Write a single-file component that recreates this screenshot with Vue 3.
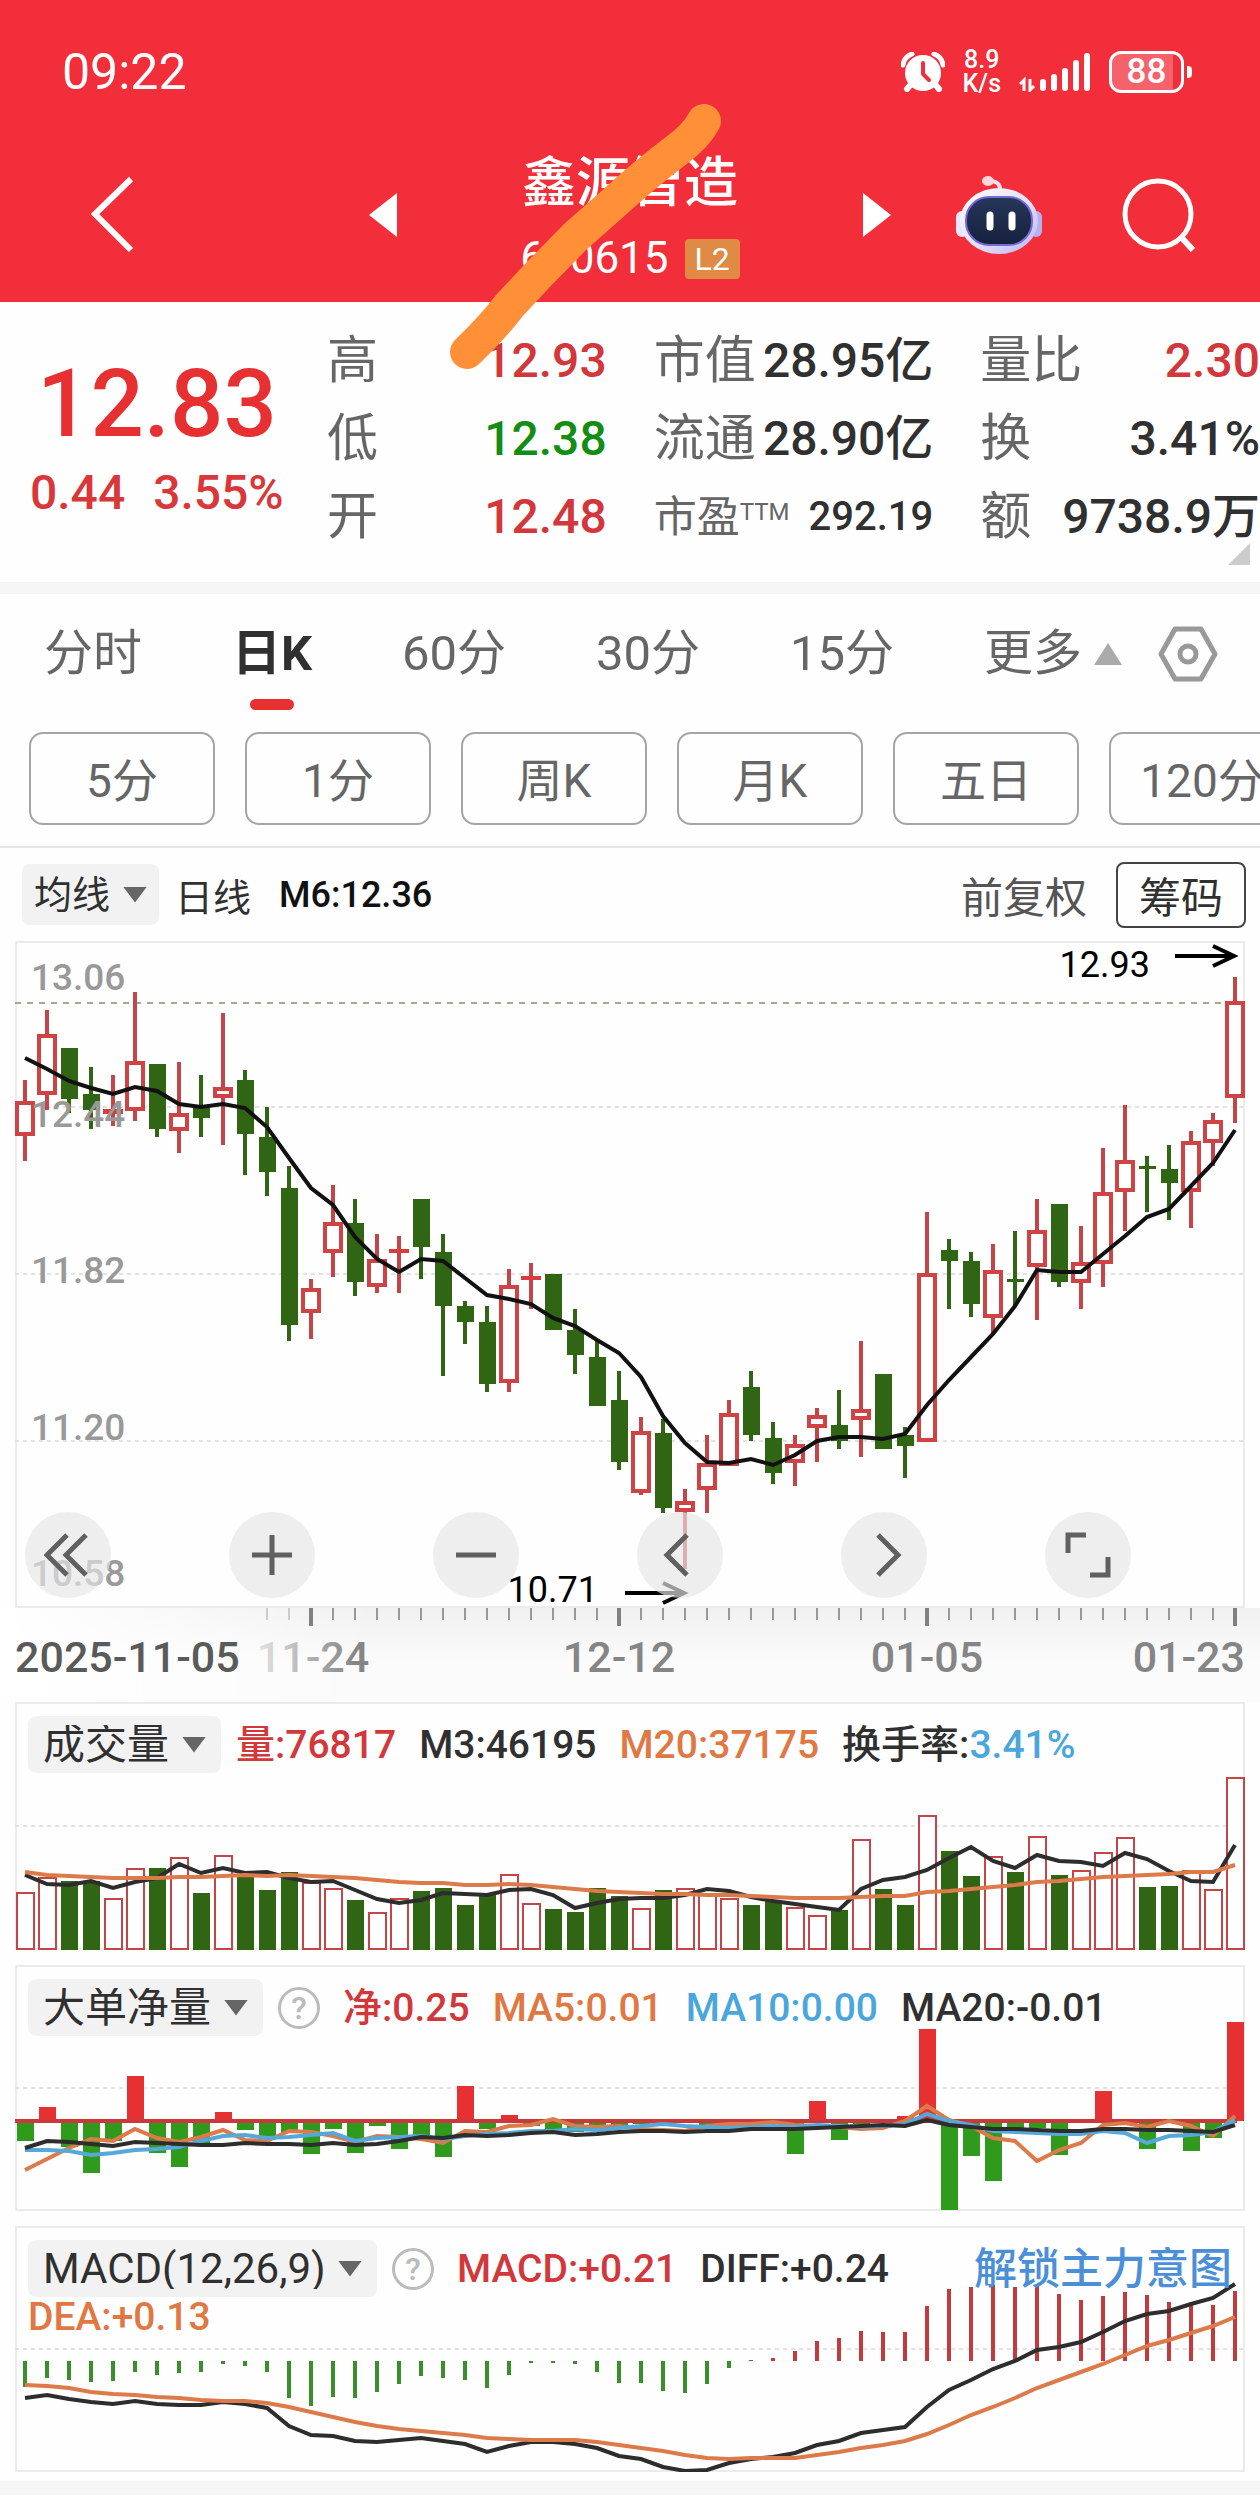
<template>
  <div class="page">
    <header class="header">
      <div class="status">
        <span class="clock">09:22</span>
        <div class="status-icons">
          <svg class="alarm" viewBox="0 0 44 40" width="44" height="40">
            <path d="M2 13 Q3 5 11 2 M42 13 Q41 5 33 2" fill="none" stroke="#fff" stroke-width="5" stroke-linecap="round" />
            <path d="M11 31 L6 37 M33 31 L38 37" stroke="#fff" stroke-width="6" stroke-linecap="round" />
            <circle cx="22" cy="21" r="18" fill="#fff" />
            <path d="M22 11 V22 L28 28" fill="none" stroke="#f22e3a" stroke-width="4" stroke-linecap="round" stroke-linejoin="round" />
          </svg>
          <span class="speed"><span>8.9</span><span>K/s</span></span>
          <svg class="signal" viewBox="0 0 72 40" width="72" height="40">
            <path d="M5 39 V28 L1 32 M11 27 V38 L15 34" fill="none" stroke="#fff" stroke-width="3" />
            <path d="M24 36 V30 M35 36 V25 M46 36 V19 M57 36 V11 M68 36 V4" stroke="#fff" stroke-width="6" stroke-linecap="round" />
          </svg>
          <span class="battery">88</span>
        </div>
      </div>

      <nav class="nav">
        <button class="icon-btn back" aria-label="返回">
          <svg viewBox="0 0 44 78" width="44" height="78">
            <path d="M40 3 L4 38 L40 74" fill="none" stroke="#fff" stroke-width="6" />
          </svg>
        </button>
        <div class="switcher">
          <button class="icon-btn" aria-label="上一只">
            <svg viewBox="0 0 28 44" width="28" height="44"><path d="M28 0 V44 L0 22 Z" fill="#fff" /></svg>
          </button>
          <div class="stock">
            <h1>鑫源智造</h1>
            <p>600615 <span class="level">L2</span></p>
          </div>
          <button class="icon-btn" aria-label="下一只">
            <svg viewBox="0 0 28 44" width="28" height="44"><path d="M0 0 V44 L28 22 Z" fill="#fff" /></svg>
          </button>
        </div>
        <div class="actions">
          <button class="icon-btn" aria-label="助手">
            <svg viewBox="0 0 86 80" width="86" height="80">
              <defs>
                <linearGradient id="shell" x1="0" y1="0" x2="1" y2="1">
                  <stop offset="0" stop-color="#ffffff" />
                  <stop offset="0.55" stop-color="#e3e0fb" />
                  <stop offset="1" stop-color="#b9b2f2" />
                </linearGradient>
                <linearGradient id="visor" x1="0" y1="0" x2="0" y2="1">
                  <stop offset="0" stop-color="#27375a" />
                  <stop offset="1" stop-color="#15203c" />
                </linearGradient>
              </defs>
              <path d="M44 16 Q45 6 33 6" fill="none" stroke="#f3dfee" stroke-width="4" />
              <ellipse cx="32" cy="6" rx="6" ry="5" fill="#ffd5dc" />
              <rect x="0" y="36" width="12" height="26" rx="6" fill="#e9e6fb" />
              <rect x="74" y="36" width="12" height="26" rx="6" fill="#b7b0f0" />
              <ellipse cx="43" cy="46" rx="39" ry="33" fill="url(#shell)" />
              <rect x="10" y="22" width="66" height="48" rx="23" fill="url(#visor)" stroke="#7669d8" stroke-width="2" />
              <path d="M34 40 V52 M56 40 V52" stroke="#fff" stroke-width="7" stroke-linecap="round" />
            </svg>
          </button>
          <button class="icon-btn" aria-label="搜索">
            <svg viewBox="0 0 74 74" width="74" height="74">
              <circle cx="36" cy="36" r="33" fill="none" stroke="#fff" stroke-width="5" />
              <path d="M59 59 L71 72" stroke="#fff" stroke-width="6" />
            </svg>
          </button>
        </div>
      </nav>

      <svg class="marker" viewBox="0 0 300 300" width="300" height="300" aria-hidden="true">
        <path d="M264 37 Q256 52 237 66 Q205 90 169 123 L135 153 L96 193 L69 222 Q54 242 27 268" fill="none" stroke="#ff9038" stroke-width="34" stroke-linecap="round" stroke-linejoin="round" />
      </svg>
    </header>

    <section class="quote">
      <div class="price">
        <strong>12.83</strong>
        <p><span>0.44</span><span>3.55%</span></p>
      </div>
      <dl v-for="(group, g) in quotes" :key="g">
        <div v-for="row in group" :key="row.label" :class="{ small: row.sup }">
          <dt>{{ row.label }}<sup v-if="row.sup">{{ row.sup }}</sup></dt>
          <dd :class="row.tone">{{ row.value }}</dd>
        </div>
      </dl>
      <i class="fold"></i>
    </section>

    <div class="tabs">
      <button v-for="tab in tabs" :key="tab" :class="{ active: tab === activeTab }" @click="activeTab = tab">{{ tab }}</button>
      <button class="more">更多<i class="tri up"></i></button>
      <button class="icon-btn" aria-label="设置">
        <svg viewBox="0 0 60 56" width="60" height="56">
          <path d="M17 3 H43 L57 28 L43 53 H17 L3 28 Z" fill="none" stroke="#999" stroke-width="5" stroke-linejoin="round" />
          <circle cx="30" cy="28" r="8" fill="none" stroke="#999" stroke-width="5" />
        </svg>
      </button>
    </div>

    <div class="chips">
      <button v-for="chip in chips" :key="chip">{{ chip }}</button>
    </div>

    <div class="toolbar">
      <label class="picker">
        <select aria-label="主图指标"><option>均线</option></select>
        <i class="tri"></i>
      </label>
      <span>日线</span>
      <span class="ma">M6:12.36</span>
      <button class="adjust">前复权</button>
      <button class="cost">筹码</button>
    </div>

    <section class="panel kline">
      <svg viewBox="0 0 1230 667">
        <g class="grid">
          <path v-for="y in [166, 333, 500]" :key="y" :d="`M0 ${y} H1230`" />
        </g>
        <path d="M0 62 H1210" class="last-price" />
        <g v-for="(c, i) in candles" :key="i" :class="c[0] === 'r' ? 'rise' : 'fall'">
          <path :d="`M${cx(i)} ${c[1]} V${c[2]} M${cx(i)} ${c[3]} V${c[4]}`" class="wick" />
          <rect v-if="c[0] === 'g'" :x="cx(i) - 8" :y="c[2]" width="17" :height="c[3] - c[2]" class="solid" />
          <rect v-else-if="c[3] - c[2] < 7" :x="cx(i) - 10" :y="c[2]" width="20" :height="c[3] - c[2]" class="solid" />
          <rect v-else :x="cx(i) - 8" :y="c[2] + 2" width="16" :height="c[3] - c[2] - 4" class="hollow" />
        </g>
        <g class="scale">
          <text x="16" y="49">13.06</text>
          <text x="16" y="186">12.44</text>
          <text x="16" y="342">11.82</text>
          <text x="16" y="499">11.20</text>
          <text x="16" y="645">10.58</text>
        </g>
        <polyline :points="line(ma6)" class="ln black" />
        <g class="mark">
          <text x="1135" y="36" text-anchor="end">12.93</text>
          <path d="M1160 15 H1219 M1198 5 L1219 15 L1198 25" />
          <text x="583" y="661" text-anchor="end">10.71</text>
          <path d="M610 652 H669 M648 642 L669 652 L648 662" />
        </g>
      </svg>
      <div class="controls">
        <button v-for="c in controls" :key="c.name" :aria-label="c.name">
          <svg viewBox="0 0 48 48" width="48" height="48"><path :d="c.d" fill="none" stroke="#606060" stroke-width="5" /></svg>
        </button>
      </div>
    </section>

    <div class="axis">
      <svg viewBox="0 0 1230 94">
        <defs>
          <linearGradient id="fade" gradientUnits="userSpaceOnUse" x1="240" y1="0" x2="340" y2="0">
            <stop offset="0" stop-color="#e6e6e6" />
            <stop offset="1" stop-color="#858585" />
          </linearGradient>
        </defs>
        <template v-for="i in 45" :key="i">
          <path :d="`M${cx(i + 10)} 0 V${isMajor(i + 10) ? 18 : 12}`" :class="['tick', { major: isMajor(i + 10), pale: i < 3 }]" />
        </template>
        <text x="0" y="64" class="first">2025-11-05</text>
        <text x="298" y="64" text-anchor="middle" class="faded">11-24</text>
        <text x="604" y="64" text-anchor="middle">12-12</text>
        <text x="912" y="64" text-anchor="middle">01-05</text>
        <text x="1230" y="64" text-anchor="end">01-23</text>
      </svg>
    </div>

    <section class="panel">
      <svg viewBox="0 0 1230 248">
        <path d="M0 124 H1230" class="dots" />
        <template v-for="(h, i) in volumes" :key="i">
          <rect v-if="candles[i][0] === 'g'" :x="cx(i) - 8" :y="248 - h" width="17" :height="h" fill="#306514" />
          <rect v-else :x="cx(i) - 8" :y="249 - h" width="17" :height="h - 2" class="vol" />
        </template>
        <polyline :points="line(vol3, 248)" class="ln dark" />
        <polyline :points="line(vol20, 248)" class="ln orange" />
      </svg>
      <div class="head">
        <label class="picker">
          <select aria-label="副图一"><option>成交量</option></select>
          <i class="tri"></i>
        </label>
        <span class="red">量:76817</span>
        <span>M3:46195</span>
        <span class="orange">M20:37175</span>
        <span>换手率:<em class="blue">3.41%</em></span>
      </div>
    </section>

    <section class="panel">
      <svg viewBox="0 0 1230 246">
        <path d="M0 123 H1230" class="dots" />
        <rect v-for="(v, i) in net" :key="i" :x="cx(i) - 8" :y="v > 0 ? 156 - v : 156" width="17" :height="Math.abs(v)" :fill="v > 0 ? '#e63031' : '#2f9a1b'" />
        <path d="M0 156 H1222" stroke="#c9393b" stroke-width="4" />
        <polyline :points="line(net5)" class="ln orange" />
        <polyline :points="line(net10)" class="ln blue" />
        <polyline :points="line(net20)" class="ln dark" />
      </svg>
      <div class="head">
        <label class="picker">
          <select aria-label="副图二"><option>大单净量</option></select>
          <i class="tri"></i>
        </label>
        <button class="help" aria-label="说明">?</button>
        <span class="red">净:0.25</span>
        <span class="orange">MA5:0.01</span>
        <span class="blue">MA10:0.00</span>
        <span>MA20:-0.01</span>
      </div>
    </section>

    <section class="panel">
      <svg viewBox="0 0 1230 246">
        <path d="M0 123 H1230" class="dots" />
        <path v-for="(v, i) in macd" :key="i" :d="`M${cx(i)} 135 V${135 - v}`" :stroke="v > 0 ? '#c23a3c' : '#3a8f2c'" stroke-width="4" />
        <polyline :points="line(diff)" class="ln dark" />
        <polyline :points="line(dea)" class="ln orange" />
      </svg>
      <div class="head">
        <label class="picker">
          <select aria-label="副图三"><option>MACD(12,26,9)</option></select>
          <i class="tri"></i>
        </label>
        <button class="help" aria-label="说明">?</button>
        <span class="red">MACD:+0.21</span>
        <span>DIFF:+0.24</span>
        <a href="#" class="unlock">解锁主力意图</a>
        <span class="orange second">DEA:+0.13</span>
      </div>
    </section>
    <div class="band"></div>
  </div>
</template>

<script setup>
import { ref } from 'vue'

const tabs = ['分时', '日K', '60分', '30分', '15分']
const activeTab = ref('日K')
const chips = ['5分', '1分', '周K', '月K', '五日', '120分']

const quotes = [
  [
    { label: '高', value: '12.93', tone: 'red' },
    { label: '低', value: '12.38', tone: 'green' },
    { label: '开', value: '12.48', tone: 'red' }
  ],
  [
    { label: '市值', value: '28.95亿' },
    { label: '流通', value: '28.90亿' },
    { label: '市盈', sup: 'TTM', value: '292.19' }
  ],
  [
    { label: '量比', value: '2.30', tone: 'red' },
    { label: '换', value: '3.41%' },
    { label: '额', value: '9738.9万' }
  ]
]

const controls = [
  { name: '最早', d: 'M23 4 L3 24 L23 44 M42 4 L22 24 L42 44' },
  { name: '放大', d: 'M4 24 H44 M24 4 V44' },
  { name: '缩小', d: 'M4 24 H44' },
  { name: '左移', d: 'M31 4 L11 24 L31 44' },
  { name: '右移', d: 'M18 4 L38 24 L18 44' },
  { name: '全屏', d: 'M4 22 V4 H22 M26 44 H44 V26' }
]

// colour, high, body top, body bottom, low
const candles = [
  ['r', 139, 160, 195, 220], ['r', 69, 93, 154, 169], ['g', 107, 107, 158, 172], ['g', 126, 153, 169, 188],
  ['r', 134, 168, 173, 185], ['r', 51, 120, 170, 180], ['g', 123, 123, 188, 196], ['r', 121, 172, 190, 212],
  ['g', 134, 166, 177, 196], ['r', 72, 146, 157, 204], ['g', 129, 139, 193, 234], ['g', 166, 196, 231, 255],
  ['g', 225, 247, 384, 400], ['r', 338, 347, 372, 398], ['r', 244, 281, 312, 336], ['g', 258, 282, 341, 355],
  ['r', 293, 318, 346, 352], ['r', 295, 308, 312, 352], ['g', 258, 258, 306, 338], ['g', 293, 311, 365, 435],
  ['g', 360, 365, 381, 403], ['g', 365, 381, 443, 451], ['r', 328, 344, 442, 451], ['r', 322, 335, 339, 368],
  ['g', 333, 333, 389, 389], ['g', 368, 389, 414, 433], ['g', 400, 416, 465, 465], ['g', 430, 459, 521, 529],
  ['r', 476, 490, 552, 554], ['g', 478, 492, 567, 572], ['r', 548, 560, 571, 628], ['r', 494, 522, 549, 572],
  ['r', 459, 472, 525, 525], ['g', 430, 446, 494, 500], ['g', 481, 497, 532, 543], ['r', 494, 503, 522, 545],
  ['r', 467, 474, 487, 521], ['g', 449, 484, 500, 508], ['r', 400, 468, 479, 516], ['g', 433, 433, 508, 508],
  ['g', 486, 494, 505, 537], ['r', 271, 332, 501, 501], ['g', 298, 309, 320, 368], ['g', 311, 320, 363, 376],
  ['r', 303, 329, 377, 392], ['g', 290, 338, 341, 365], ['r', 258, 289, 326, 379], ['g', 263, 263, 341, 346],
  ['r', 285, 321, 342, 368], ['r', 207, 251, 323, 346], ['r', 164, 219, 251, 290], ['g', 215, 225, 228, 271],
  ['g', 204, 228, 242, 279], ['r', 190, 200, 251, 287], ['r', 172, 179, 202, 225], ['r', 36, 60, 157, 182]
]
const ma6 = [117, 128, 140, 147, 153, 146, 150, 163, 166, 163, 167, 186, 217, 247, 264, 296, 318, 331, 318, 320, 337, 354, 358, 363, 377, 385, 399, 412, 436, 475, 502, 521, 522, 518, 524, 514, 500, 496, 496, 498, 493, 464, 439, 416, 393, 365, 329, 331, 331, 313, 295, 276, 268, 245, 222, 189]

const volumes = [58, 73, 69, 69, 52, 82, 82, 93, 57, 95, 76, 60, 78, 68, 62, 50, 38, 52, 59, 62, 45, 57, 76, 47, 41, 38, 62, 54, 42, 60, 62, 57, 52, 45, 49, 43, 35, 40, 111, 61, 45, 135, 99, 74, 94, 78, 114, 75, 80, 98, 113, 63, 64, 80, 61, 173]
const vol3 = [75, 66, 65, 69, 62, 68, 72, 86, 77, 82, 77, 78, 72, 68, 69, 60, 51, 47, 50, 57, 56, 55, 60, 61, 55, 42, 47, 51, 52, 52, 55, 61, 59, 53, 49, 46, 43, 40, 61, 70, 73, 80, 92, 103, 89, 82, 95, 89, 88, 84, 97, 91, 79, 69, 68, 105]
const vol20 = [78, 75, 74, 73, 72, 72, 72, 73, 73, 74, 75, 74, 75, 74, 73, 72, 70, 68, 67, 67, 65, 65, 66, 65, 63, 61, 59, 58, 57, 56, 56, 55, 55, 54, 53, 52, 52, 52, 53, 54, 54, 58, 59, 61, 63, 65, 68, 69, 71, 73, 74, 75, 76, 78, 78, 85]

const net = [-20, 14, -26, -52, -20, 45, -32, -46, -24, 9, -9, -18, -12, -33, -8, -32, -5, -28, -14, -36, 35, -8, 6, -5, -8, -11, -4, -5, -3, -3, -2, -4, 0, 0, 0, -33, 20, -19, -3, 0, 5, 92, -89, -35, -60, -8, -7, -34, 0, 30, 0, -28, 0, -30, -17, 99]
const net5 = [205, 194, 183, 174, 176, 164, 173, 177, 172, 165, 175, 176, 166, 167, 171, 177, 171, 172, 174, 178, 166, 167, 161, 160, 154, 161, 162, 161, 164, 165, 166, 161, 159, 159, 157, 160, 161, 162, 164, 163, 156, 141, 155, 161, 173, 176, 196, 185, 178, 160, 158, 162, 156, 161, 171, 151]
const net10 = [185, 185, 186, 190, 188, 185, 184, 182, 176, 171, 170, 173, 172, 170, 168, 176, 173, 172, 171, 174, 171, 169, 168, 166, 166, 164, 165, 163, 161, 159, 161, 162, 163, 162, 161, 162, 160, 161, 162, 161, 159, 149, 156, 160, 166, 167, 168, 169, 169, 166, 168, 178, 171, 170, 167, 155]
const net20 = [183, 176, 177, 179, 181, 177, 178, 179, 180, 180, 178, 179, 179, 180, 178, 180, 179, 176, 172, 173, 170, 171, 170, 168, 167, 170, 169, 167, 166, 166, 167, 166, 166, 164, 164, 164, 163, 162, 161, 160, 161, 155, 160, 162, 164, 164, 165, 166, 166, 164, 164, 165, 165, 166, 167, 160]

const macd = [-26, -17, -19, -21, -20, -11, -14, -12, -11, -3, -5, -11, -37, -45, -36, -37, -31, -23, -15, -17, -19, -27, -14, -2, -2, -3, -11, -22, -22, -30, -32, -23, -7, 1, 3, 10, 20, 23, 30, 29, 29, 55, 72, 74, 76, 74, 75, 67, 61, 65, 69, 66, 59, 57, 56, 70]
const diff = [172, 169, 173, 176, 178, 175, 178, 179, 179, 176, 178, 182, 200, 209, 210, 215, 216, 214, 212, 215, 218, 226, 220, 216, 216, 218, 222, 230, 233, 241, 245, 244, 237, 233, 231, 227, 219, 215, 207, 204, 201, 181, 164, 154, 143, 135, 124, 121, 116, 106, 95, 88, 85, 78, 72, 58]
const dea = [159, 160, 162, 166, 168, 169, 171, 172, 174, 175, 175, 177, 181, 186, 191, 196, 200, 203, 205, 207, 209, 212, 213, 214, 214, 214, 216, 219, 222, 225, 229, 232, 233, 232, 232, 232, 229, 226, 222, 219, 215, 208, 199, 189, 181, 172, 162, 154, 146, 138, 129, 120, 114, 107, 100, 91]

const cx = (i) => 10 + i * 22
const isMajor = (i) => (i - 13) % 14 === 0

// With a base the values are heights above it, otherwise plain y positions
const line = (values, base) => values.map((v, i) => `${cx(i)},${base ? base - v : v}`).join(' ')
</script>

<style>
body {
  margin: 0;
  background: #fff;
}
</style>

<style scoped>
.page {
  font-family: Roboto, "Noto Sans CJK SC", sans-serif;
  color: #303030;
  background: #fefefe;
  overflow: hidden;
}

button {
  border: 0;
  padding: 0;
  background: none;
  color: inherit;
  font: inherit;
  cursor: pointer;
  white-space: nowrap;
}

svg {
  display: block;
}

.icon-btn {
  display: flex;
}

/* header */
.header {
  position: relative;
  background: #f22e3a;
  color: #fff;
}

.status {
  display: flex;
  align-items: center;
  justify-content: space-between;
  padding: 42px 76px 32px 62px;
}

.clock {
  font-size: 50px;
  line-height: 60px;
}

.status-icons {
  display: flex;
  align-items: center;
  gap: 18px;
}

.speed {
  display: flex;
  flex-direction: column;
  font-size: 25px;
  font-weight: 500;
  line-height: 24px;
  text-align: center;
}

.battery {
  position: relative;
  box-sizing: border-box;
  width: 75px;
  height: 42px;
  border: 3px solid #fff;
  border-radius: 12px;
  background: linear-gradient(to right, rgba(255, 255, 255, 0.25) 88%, transparent 88%);
  font-size: 35px;
  font-weight: 500;
  line-height: 36px;
  text-align: center;
}

.battery::after {
  content: "";
  position: absolute;
  top: 12px;
  right: -11px;
  width: 5px;
  height: 12px;
  border-radius: 0 4px 4px 0;
  background: #fff;
}

.nav {
  display: grid;
  grid-template-columns: 1fr auto 1fr;
  align-items: center;
  padding: 0 64px 6px 91px;
}

.switcher {
  display: flex;
  align-items: center;
  justify-content: space-between;
  width: 522px;
  margin-left: -27px;
}

.stock {
  padding-top: 12px;
  text-align: center;
}

.stock h1 {
  margin: 0;
  font-size: 54px;
  font-weight: 500;
  line-height: 75px;
}

.stock p {
  display: flex;
  align-items: center;
  justify-content: center;
  gap: 16px;
  margin: 0;
  font-size: 44px;
  line-height: 75px;
}

.level {
  padding: 0 10px;
  border-radius: 4px;
  background: #df8b45;
  font-size: 32px;
  line-height: 40px;
}

.actions {
  display: flex;
  align-items: center;
  justify-content: flex-end;
  gap: 80px;
}

.marker {
  position: absolute;
  left: 50%;
  bottom: -82px;
  margin-left: -190px;
  z-index: 2;
  pointer-events: none;
}

/* quote */
.quote {
  position: relative;
  display: flex;
  gap: 47px;
  padding: 20px 0 26px;
  border-bottom: 12px solid #f5f5f5;
}

.price {
  box-sizing: border-box;
  width: 280px;
  padding: 26px 0 0 30px;
  color: #d9383a;
  font-weight: 500;
}

.price strong {
  display: block;
  padding-left: 7px;
  color: #e63031;
  font-size: 94px;
  font-weight: 500;
  line-height: 112px;
}

.price p {
  display: flex;
  gap: 28px;
  margin: 0;
  font-size: 48px;
  line-height: 66px;
}

.quote dl {
  flex: 1;
  margin: 0;
}

.quote dl div {
  display: flex;
  justify-content: space-between;
  font-size: 51px;
  line-height: 78px;
  white-space: nowrap;
}

.quote dt {
  color: #666;
}

.quote dd {
  margin: 0;
  font-size: 48px;
  font-weight: 500;
}

.quote .small dt {
  font-size: 43px;
}

.quote .small dd {
  font-size: 40px;
}

.quote sup {
  font-size: 24px;
  line-height: 24px;
  vertical-align: 12px;
}

.fold {
  position: absolute;
  right: 10px;
  bottom: 17px;
  width: 22px;
  height: 22px;
  background: #ccc;
  clip-path: polygon(100% 0, 100% 100%, 0 100%);
}

/* tabs */
.tabs {
  display: flex;
  align-items: center;
  justify-content: space-between;
  height: 120px;
  padding: 0 42px 0 44px;
  color: #666;
  font-size: 49px;
}

.tabs button {
  position: relative;
  line-height: 80px;
}

.tabs .active {
  color: #303030;
  font-weight: 700;
}

.tabs .active::after {
  content: "";
  position: absolute;
  left: 50%;
  bottom: -16px;
  width: 44px;
  height: 11px;
  margin-left: -22px;
  border-radius: 6px;
  background: #e63031;
}

.more {
  display: flex;
  align-items: center;
  gap: 12px;
}

.tabs .icon-btn {
  margin-left: -54px;
}

.tri {
  width: 24px;
  height: 16px;
  background: #666;
  clip-path: polygon(0 0, 100% 0, 50% 100%);
}

.tri.up {
  width: 28px;
  height: 22px;
  background: #aaa;
  clip-path: polygon(50% 0, 100% 100%, 0 100%);
}

.chips {
  display: flex;
  gap: 30px;
  padding: 18px 0 21px 29px;
  border-bottom: 2px solid #e8e8e8;
  overflow: hidden;
}

.chips button {
  box-sizing: border-box;
  flex: 0 0 186px;
  height: 93px;
  border: 2px solid #a5a5a5;
  border-radius: 14px;
  padding-bottom: 4px;
  color: #666;
  font-size: 46px;
}

.toolbar {
  display: flex;
  align-items: center;
  height: 93px;
  padding: 0 14px 0 22px;
  font-size: 38px;
}

.toolbar .ma {
  margin-left: 28px;
  color: #111;
  font-size: 36px;
  font-weight: 500;
}

.adjust {
  margin-left: auto;
  color: #555;
  font-size: 42px;
}

.cost {
  box-sizing: border-box;
  height: 66px;
  margin-left: 29px;
  padding: 0 21px;
  border: 2px solid #444;
  border-radius: 8px;
  font-size: 42px;
}

.picker {
  display: flex;
  align-items: center;
  gap: 12px;
  height: 57px;
  padding: 0 15px;
  border-radius: 8px;
  background: #f2f2f2;
}

.picker select {
  appearance: none;
  border: 0;
  padding: 0;
  background: none;
  color: #303030;
  font: inherit;
}

.toolbar .picker {
  height: 61px;
  margin-right: 16px;
  padding: 0 12px;
}

/* chart panels */
.panel {
  display: grid;
  margin: 0 15px 15px;
  box-shadow: inset 0 0 0 2px #ebebeb;
}

.panel > * {
  grid-area: 1 / 1;
}

.panel > svg,
.axis svg {
  width: 100%;
  height: auto;
}

.kline {
  margin-bottom: 0;
}

.grid path,
.dots {
  stroke: #e2e2e2;
  stroke-width: 2;
  stroke-dasharray: 4 4;
}

.last-price {
  stroke: #aaa58c;
  stroke-width: 2;
  stroke-dasharray: 6 6;
}

.rise .wick {
  stroke: #c44548;
  stroke-width: 4;
}

.rise .solid {
  fill: #d83c3e;
}

.rise .hollow {
  fill: #fff;
  stroke: #d04345;
  stroke-width: 4;
}

.fall .wick {
  stroke: #306514;
  stroke-width: 4;
}

.fall .solid {
  fill: #306514;
}

.scale text {
  fill: #999;
  font-size: 37px;
  font-weight: 500;
}

.mark text {
  fill: #000;
  font-size: 36px;
}

.mark path {
  fill: none;
  stroke: #000;
  stroke-width: 4;
}

.ln {
  fill: none;
  stroke-width: 4;
}

.ln.black {
  stroke: #111;
}

.ln.dark {
  stroke: #2d2d2d;
}

.ln.orange {
  stroke: #dc7a4a;
}

.ln.blue {
  stroke: #55a8d8;
}

.vol {
  fill: #fff;
  stroke: #c44548;
  stroke-width: 2;
}

.controls {
  align-self: end;
  display: flex;
  gap: 118px;
  padding: 0 0 10px 10px;
}

.controls button {
  display: grid;
  place-items: center;
  width: 86px;
  height: 86px;
  border-radius: 50%;
  background: rgba(230, 230, 230, 0.67);
}

.axis {
  padding: 0 15px;
  background: linear-gradient(to right, #fff, transparent 30%), linear-gradient(#f1f1f1, #fbfbfb 60%);
}

.axis text {
  fill: #858585;
  font-size: 43px;
  font-weight: 500;
}

.axis .faded {
  fill: url(#fade);
}

.axis .first {
  fill: #5a5a5a;
}

.tick {
  stroke: #999;
  stroke-width: 2;
}

.tick.major {
  stroke: #808080;
  stroke-width: 4;
}

.tick.pale {
  stroke: #ccc;
}

.head {
  display: flex;
  flex-wrap: wrap;
  align-items: center;
  align-content: flex-start;
  column-gap: 23px;
  padding: 14px 13px 0;
  font-size: 39px;
  font-weight: 500;
  line-height: 40px;
  white-space: nowrap;
}

.head .picker {
  margin-right: -8px;
  font-size: 42px;
  font-weight: 400;
}

.head em {
  font-style: normal;
}

.help {
  box-sizing: border-box;
  width: 42px;
  height: 42px;
  border: 3px solid #bbb;
  border-radius: 50%;
  color: #bbb;
  font-size: 32px;
  line-height: 36px;
}

.unlock {
  margin-left: auto;
  color: #4a8fd8;
  font-size: 43px;
  text-decoration: none;
}

.second {
  width: 100%;
}

.red {
  color: #d2383b;
}

.green {
  color: #138d13;
}

.orange {
  color: #e07844;
}

.blue {
  color: #4aa6dc;
}

.band {
  height: 14px;
  margin-top: -6px;
  background: #f5f5f5;
}
</style>
